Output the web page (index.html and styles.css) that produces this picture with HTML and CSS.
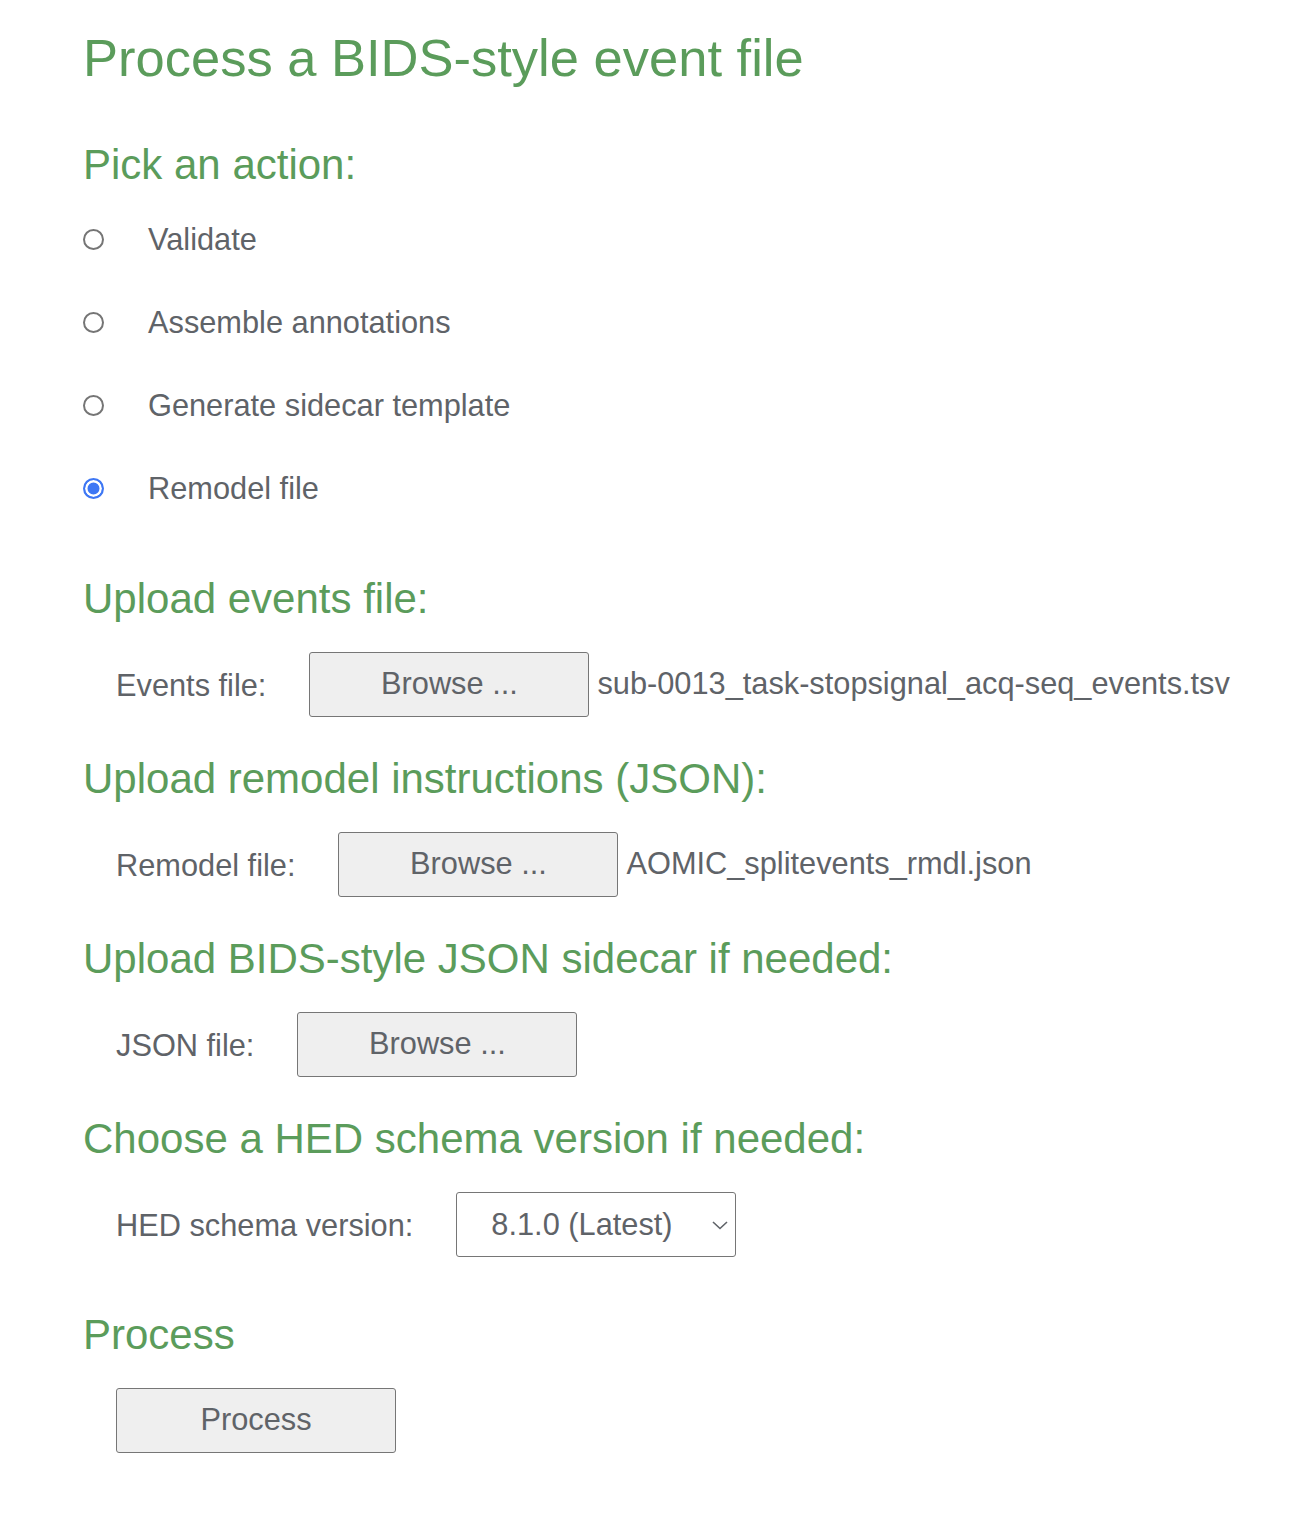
FILE: index.html
```html
<!DOCTYPE html>
<html lang="en">
<head>
<meta charset="utf-8">
<title>Process a BIDS-style event file</title>
<link rel="stylesheet" href="styles.css">
</head>
<body>
<main class="page">
  <h1 class="title">Process a BIDS-style event file</h1>

  <section class="section section-actions">
    <h2 class="heading">Pick an action:</h2>
    <div class="radio-list">
      <label class="radio-row"><input type="radio" name="action" class="radio"><span class="radio-label">Validate</span></label>
      <label class="radio-row"><input type="radio" name="action" class="radio"><span class="radio-label">Assemble annotations</span></label>
      <label class="radio-row"><input type="radio" name="action" class="radio"><span class="radio-label">Generate sidecar template</span></label>
      <label class="radio-row"><input type="radio" name="action" class="radio" checked><span class="radio-label">Remodel file</span></label>
    </div>
  </section>

  <section class="section section-upload">
    <h2 class="heading">Upload events file:</h2>
    <div class="field-row">
      <span class="field-label">Events file:</span>
      <button class="btn" type="button">Browse ...</button>
      <span class="file-name">sub-0013_task-stopsignal_acq-seq_events.tsv</span>
    </div>
  </section>

  <section class="section">
    <h2 class="heading">Upload remodel instructions (JSON):</h2>
    <div class="field-row">
      <span class="field-label">Remodel file:</span>
      <button class="btn" type="button">Browse ...</button>
      <span class="file-name">AOMIC_splitevents_rmdl.json</span>
    </div>
  </section>

  <section class="section">
    <h2 class="heading">Upload BIDS-style JSON sidecar if needed:</h2>
    <div class="field-row">
      <span class="field-label">JSON file:</span>
      <button class="btn" type="button">Browse ...</button>
    </div>
  </section>

  <section class="section">
    <h2 class="heading">Choose a HED schema version if needed:</h2>
    <div class="field-row">
      <span class="field-label">HED schema version:</span>
      <select class="select">
        <option>8.1.0 (Latest)</option>
      </select>
    </div>
  </section>

  <section class="section section-process">
    <h2 class="heading">Process</h2>
    <div class="field-row">
      <button class="btn btn-process" type="button">Process</button>
    </div>
  </section>
</main>
</body>
</html>
```

FILE: styles.css
```css
html, body {
  margin: 0;
  padding: 0;
  background: #ffffff;
}

body {
  font-family: "Liberation Sans", Arial, sans-serif;
  color: #5f6368;
}

.page {
  padding: 28px 0 60px 83px;
}

.title {
  margin: 0;
  font-size: 52.5px;
  line-height: 60px;
  font-weight: normal;
  color: #5b9c5b;
}

.heading {
  margin: 0;
  font-size: 42px;
  line-height: 48px;
  font-weight: normal;
  color: #5b9c5b;
}

.section {
  display: flex;
  flex-direction: column;
  gap: 29px;
  margin-top: 38px;
}

.section-actions {
  margin-top: 53px;
  gap: 30px;
}

.section-upload {
  margin-top: 67px;
}

.section-process {
  margin-top: 54px;
}

.radio-list {
  display: flex;
  flex-direction: column;
  gap: 43px;
}

.radio-row {
  display: flex;
  align-items: center;
  height: 40px;
}

.radio {
  box-sizing: border-box;
  flex: none;
  width: 21px;
  height: 21px;
  margin: 0;
  border: 2px solid #757575;
  border-radius: 50%;
  background: #ffffff;
  -webkit-appearance: none;
  appearance: none;
}

.radio:checked {
  border: 2px solid #3e77f4;
  background: #3e77f4;
  box-shadow: inset 0 0 0 2.5px #ffffff;
}

.radio-label {
  margin-left: 44px;
  font-size: 30.75px;
  line-height: 40px;
  position: relative;
  top: 1px;
}

.field-row {
  display: flex;
  align-items: center;
  padding-left: 33px;
  height: 65px;
}

.field-label {
  font-size: 30.75px;
  line-height: 40px;
  margin-right: 43px;
  margin-top: 3px;
}

.btn {
  box-sizing: border-box;
  width: 280px;
  height: 65px;
  padding: 0 0 2px;
  border: 1px solid #767676;
  border-radius: 3px;
  background: #efefef;
  color: #5f6368;
  font-family: "Liberation Sans", Arial, sans-serif;
  font-size: 30.75px;
}

.file-name {
  margin-left: 8px;
  margin-bottom: 2px;
  font-size: 30.75px;
  line-height: 40px;
}

.select {
  box-sizing: border-box;
  width: 280px;
  height: 65px;
  padding: 0 0 0 34px;
  border: 1px solid #767676;
  border-radius: 3px;
  background-color: #ffffff;
  background-image: url("data:image/svg+xml;utf8,<svg xmlns='http://www.w3.org/2000/svg' width='18' height='10' viewBox='0 0 18 10'><path d='M2 2 L9 8.5 L16 2' fill='none' stroke='%235f6368' stroke-width='1.6'/></svg>");
  background-repeat: no-repeat;
  background-position: right 6px center;
  color: #5f6368;
  font-family: "Liberation Sans", Arial, sans-serif;
  font-size: 30.75px;
  -webkit-appearance: none;
  appearance: none;
}
```
